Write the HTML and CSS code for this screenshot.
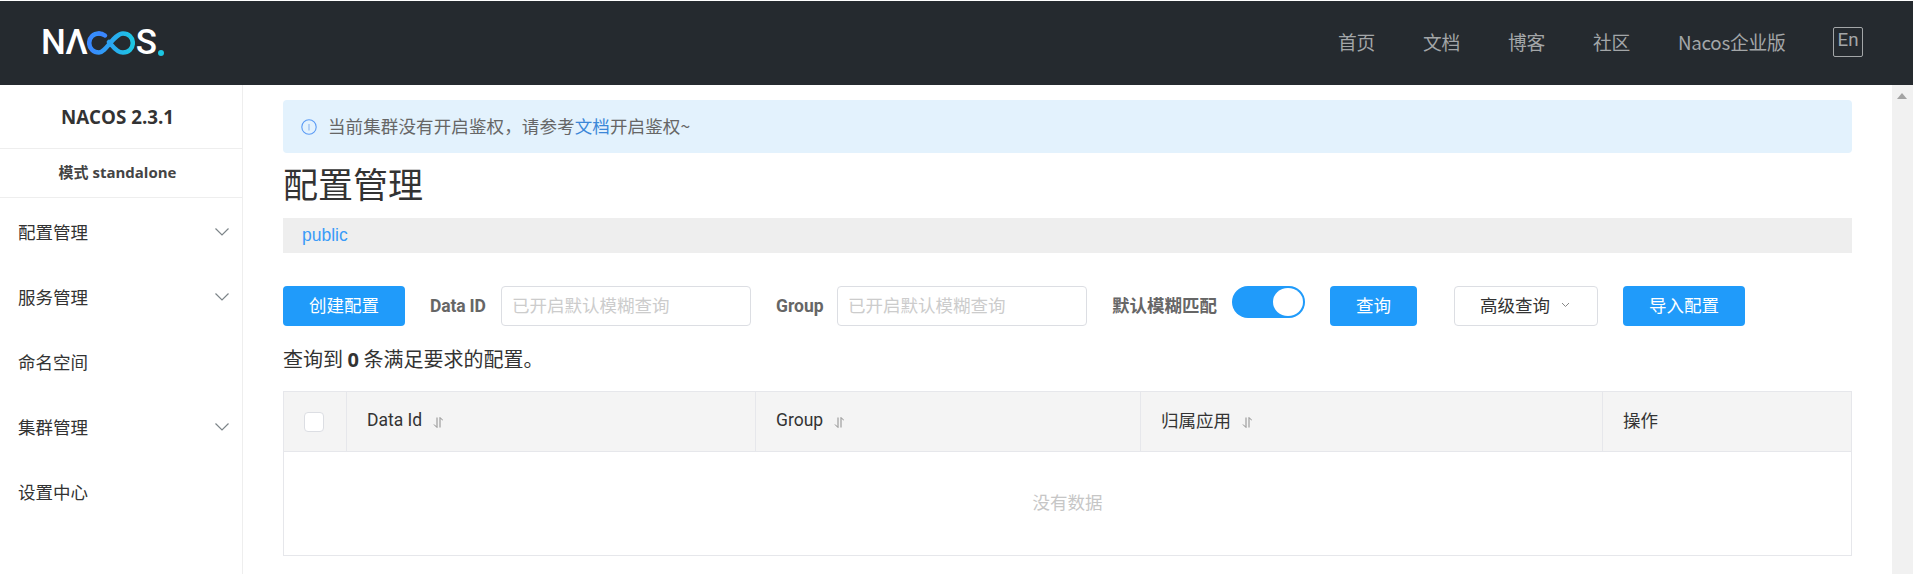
FILE: index.html
```html
<!DOCTYPE html>
<html lang="zh-CN">
<head>
<meta charset="utf-8">
<title>Nacos</title>
<link rel="stylesheet" href="styles.css">
</head>
<body>
<header class="topbar">
  <div class="logo" aria-label="NACOS.">
    <span class="logo-text">NΛ</span>
    <svg class="logo-loop" width="48" height="26" viewBox="0 0 48 26" fill="none">
      <defs><linearGradient id="loop" x1="0" x2="1" y1="0" y2="0"><stop offset="0" stop-color="#3a86ff"/><stop offset="1" stop-color="#1cc6e2"/></linearGradient></defs>
      <path d="M12 3.500C6.500 3.500 2.200 7.500 2.200 13C2.200 18.500 6.500 22.500 12 22.500C19 22.500 27 3.500 36 3.500C41.500 3.500 45.800 7.500 45.800 13C45.800 18.500 41.500 22.500 36 22.500C29 22.500 25 15 22 12" stroke="url(#loop)" stroke-width="4.500" stroke-linecap="round"/>
      <path d="M12 3.500C14.500 3.500 16.500 4.500 18 5.500" stroke="#3a86ff" stroke-width="4.500" stroke-linecap="round"/>
    </svg>
    <span class="logo-text">S</span><span class="logo-dot"></span>
  </div>
  <nav class="topnav">
    <a class="topnav-link">首页</a>
    <a class="topnav-link">文档</a>
    <a class="topnav-link">博客</a>
    <a class="topnav-link">社区</a>
    <a class="topnav-link topnav-product">Nacos企业版</a>
    <span class="lang">En</span>
  </nav>
</header>
<div class="page">
  <aside class="sidebar">
    <div class="version">NACOS 2.3.1</div>
    <div class="mode">模式 standalone</div>
    <ul class="menu">
      <li class="menu-item">配置管理<svg class="chev" width="14" height="8" viewBox="0 0 14 8"><path d="M.5 .5L7 7L13.500 .5" fill="none" stroke="#7d8589" stroke-width="1.200"/></svg></li>
      <li class="menu-item">服务管理<svg class="chev" width="14" height="8" viewBox="0 0 14 8"><path d="M.5 .5L7 7L13.500 .5" fill="none" stroke="#7d8589" stroke-width="1.200"/></svg></li>
      <li class="menu-item">命名空间</li>
      <li class="menu-item">集群管理<svg class="chev" width="14" height="8" viewBox="0 0 14 8"><path d="M.5 .5L7 7L13.500 .5" fill="none" stroke="#7d8589" stroke-width="1.200"/></svg></li>
      <li class="menu-item">设置中心</li>
    </ul>
  </aside>
  <main class="main">
    <div class="alert">
      <svg class="alert-icon" width="16" height="16" viewBox="0 0 16 16" fill="none"><circle cx="8" cy="8" r="7.200" stroke="#5b9bf5" stroke-width="1.100"/><path d="M8 5v6.500" stroke="#8fb6ee" stroke-width="1.100"/></svg>
      <span class="alert-text">当前集群没有开启鉴权，请参考<a class="alert-link">文档</a>开启鉴权~</span>
    </div>
    <h1 class="title">配置管理</h1>
    <div class="namespace">public</div>
    <div class="toolbar">
      <button class="btn btn-primary btn-create">创建配置</button>
      <label class="field-label label-data">Data ID</label>
      <div class="input input-data">已开启默认模糊查询</div>
      <label class="field-label label-group">Group</label>
      <div class="input input-group">已开启默认模糊查询</div>
      <label class="field-label label-fuzzy">默认模糊匹配</label>
      <div class="switch"><span class="switch-knob"></span></div>
      <button class="btn btn-primary btn-query">查询</button>
      <button class="btn btn-plain">高级查询<svg class="btn-chev" width="9" height="6" viewBox="0 0 9 6"><path d="M1 1L4.500 4.500L8 1" fill="none" stroke="#888" stroke-width="1"/></svg></button>
      <button class="btn btn-primary btn-import">导入配置</button>
    </div>
    <p class="summary">查询到 <b class="summary-count">0</b> 条满足要求的配置。</p>
    <div class="table">
      <div class="thead">
        <div class="th th-check"><span class="checkbox"></span></div>
        <div class="th th-id"><span class="th-label">Data Id</span><svg class="sort" width="10" height="11" viewBox="0 0 10 11" fill="none"><path d="M4 .5v10M1 7.500L4 10.500M7 10.500V.5M7 .5L10 3.500" stroke="#8c8c8c" stroke-width="1"/></svg></div>
        <div class="th th-group"><span class="th-label">Group</span><svg class="sort" width="10" height="11" viewBox="0 0 10 11" fill="none"><path d="M4 .5v10M1 7.500L4 10.500M7 10.500V.5M7 .5L10 3.500" stroke="#8c8c8c" stroke-width="1"/></svg></div>
        <div class="th th-app"><span class="th-label">归属应用</span><svg class="sort" width="10" height="11" viewBox="0 0 10 11" fill="none"><path d="M4 .5v10M1 7.500L4 10.500M7 10.500V.5M7 .5L10 3.500" stroke="#8c8c8c" stroke-width="1"/></svg></div>
        <div class="th th-op"><span class="th-label">操作</span></div>
      </div>
      <div class="tbody">没有数据</div>
    </div>
  </main>
  <div class="scrollbar"><span class="scroll-up"></span></div>
</div>
</body>
</html>
```
FILE: styles.css
```css
* { box-sizing: border-box; }
html, body { margin: 0; height: 574px; overflow: hidden; background: #fff; }
body {
  padding-top: 1px;
  font-family: "Noto Sans CJK SC", Roboto, sans-serif;
  font-size: 17.5px;
  color: #333;
}
.topbar {
  height: 84px;
  background: #252a2f;
  display: flex;
  align-items: center;
  justify-content: space-between;
  padding: 0 50px 0 41px;
}
.logo { display: flex; align-items: center; color: #fff; height: 26px; }
.logo-text { font-family: Roboto, sans-serif; font-weight: 500; font-size: 35px; line-height: 26px; letter-spacing: -.5px; }
.logo-loop { margin: 0 1px 0 -1px; }
.logo-dot { width: 6px; height: 6px; border-radius: 50%; background: #1cc6e2; align-self: flex-end; margin: 0 0 0 2px; }
.topnav { display: flex; align-items: center; color: #a3a6a8; font-size: 18.75px; }
.topnav-link { margin-right: 47.500px; line-height: 24px; padding-bottom: 2px; }
.topnav-product { letter-spacing: -.25px; }
.lang {
  width: 30px; height: 30px;
  margin-left: 0; margin-bottom: 2px;
  border: 1px solid #a3a6a8;
  border-radius: 2px;
  font-family: Roboto, sans-serif;
  text-align: center;
  line-height: 24px;
}
.page { display: flex; height: 489px; }
.sidebar { width: 243px; flex: none; border-right: 1px solid #eee; }
.version {
  height: 64px; border-bottom: 1px solid #eee; padding-right: 7px;
  font-family: "Open Sans", "Noto Sans CJK SC", sans-serif;
  font-weight: 700; font-size: 18.750px; color: #333;
  text-align: center; line-height: 63px;
}
.mode {
  height: 49px; border-bottom: 1px solid #eee; padding-right: 7px;
  font-family: "Open Sans", "Noto Sans CJK SC", sans-serif;
  font-weight: 700; font-size: 15px; color: #444;
  text-align: center; line-height: 47px;
}
.menu { list-style: none; margin: 0; padding: 1px 0 0; }
.menu-item {
  height: 65px; display: flex; align-items: center; justify-content: space-between;
  padding: 0 13px 0 18px; color: #333;
}
.main { flex: 1; min-width: 0; padding: 15px 40px 0; }
.alert {
  height: 53px; background: #e3f2fd; border-radius: 4px;
  display: flex; align-items: center; gap: 11px; padding: 0 18px; color: #666;
}
.alert-icon { flex: none; }
.alert-text { letter-spacing: .12px; padding-bottom: 2px; }
.alert-link { color: #3b87d8; }
.title { margin: 0; height: 65px; font-size: 35px; font-weight: 400; line-height: 50px; padding-top: 5px; color: #333; }
.namespace {
  height: 35px; background: #eee; padding-left: 19px;
  font-family: "Liberation Sans", sans-serif; color: #3a9bf8; line-height: 34px;
}
.toolbar { display: flex; align-items: flex-start; margin-top: 33px; height: 40px; }
.btn {
  height: 40px; border-radius: 4px; border: 1px solid transparent; padding: 0 0 3px;
  font: inherit; font-size: 17.5px; display: flex; align-items: center; justify-content: center;
  flex: none;
}
.btn-primary { background: #209bfa; color: #fff; }
.btn-create { width: 122px; }
.btn-query { width: 87px; margin-left: 25px; }
.btn-plain { width: 144px; margin-left: 37px; background: #fff; border-color: #dcdee3; color: #333; gap: 11px; padding-right: 2px; }
.btn-import { width: 122px; margin-left: 25px; }
.field-label {
  font-family: Roboto, "Noto Sans CJK SC", sans-serif; font-weight: 700; color: #666;
  line-height: 40px; font-size: 17.5px; flex: none;
}
.label-data { margin-left: 25px; width: 71px; letter-spacing: -.15px; }
.label-group { margin-left: 25px; width: 61px; }
.label-fuzzy { margin-left: 25px; width: 120px; }
.input {
  height: 40px; border: 1px solid #dcdee3; border-radius: 4px; background: #fff;
  color: #ccc; line-height: 36px; padding-left: 10px; flex: none; width: 250px;
  white-space: nowrap; overflow: hidden;
}
.switch {
  width: 73px; height: 32px; flex: none; background: #209bfa; border-radius: 16px;
  display: flex; justify-content: flex-end; align-items: center; padding-right: 2px;
}
.switch-knob { width: 30px; height: 28px; border-radius: 50%; background: #fff; }
.summary { margin: 20px 0 0; height: 45px; line-height: 26px; font-size: 20px; color: #333; }
.summary-count { font-family: "Open Sans", sans-serif; font-weight: 700; }
.table { border: 1px solid #e6e7eb; height: 165px; }
.thead { display: flex; height: 60px; background: #f4f4f4; border-bottom: 1px solid #e6e7eb; }
.th {
  height: 100%; border-right: 1px solid #e6e7eb; display: flex; align-items: center;
  padding-left: 20px; flex: none; color: #333;
}
.th-label { font-family: Roboto, "Noto Sans CJK SC", sans-serif; padding-bottom: 4px; }
.th-check { width: 63px; }
.th-id { width: 409px; }
.th-group { width: 385px; }
.th-app { width: 462px; }
.th-op { flex: 1; border-right: 0; }
.checkbox { width: 20px; height: 20px; background: #fff; border: 1px solid #dcdee3; border-radius: 4px; }
.sort { margin-left: 11px; margin-top: 2px; }
.tbody {
  height: 103px; display: flex; align-items: center; justify-content: center; color: #c6c6c6; padding-bottom: 4px;
}
.scrollbar { width: 21px; flex: none; background: #f1f1f1; position: relative; }
.scroll-up {
  position: absolute; left: 5px; top: 8px; width: 0; height: 0;
  border-left: 5px solid transparent; border-right: 5px solid transparent; border-bottom: 6px solid #a3a3a3;
}
```
